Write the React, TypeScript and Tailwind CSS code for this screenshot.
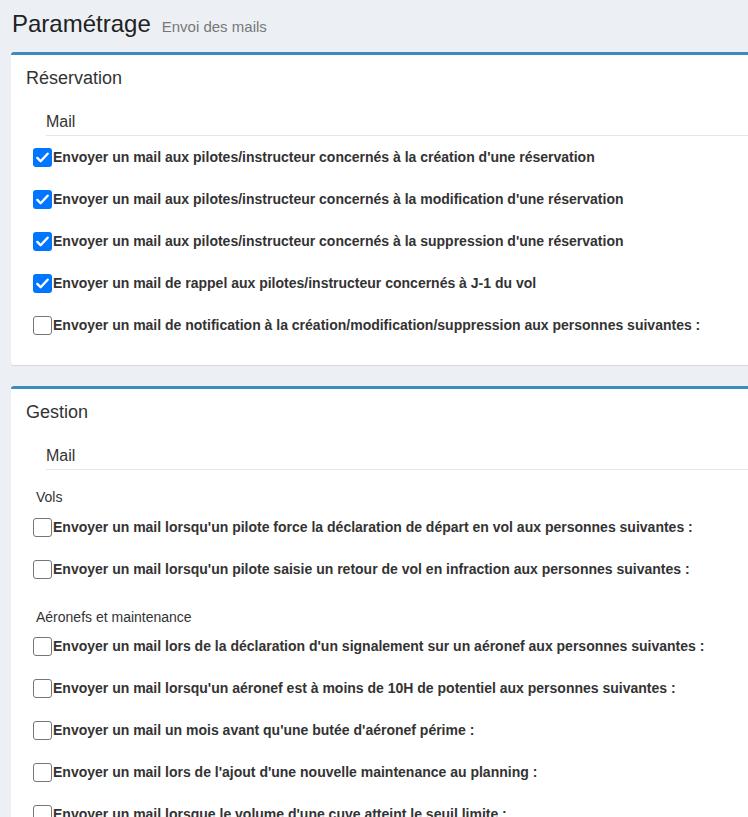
import React from "react";

type Row = { label: string; checked?: boolean };

const RESERVATION: Row[] = [
  { label: "Envoyer un mail aux pilotes/instructeur concernés à la création d'une réservation", checked: true },
  { label: "Envoyer un mail aux pilotes/instructeur concernés à la modification d'une réservation", checked: true },
  { label: "Envoyer un mail aux pilotes/instructeur concernés à la suppression d'une réservation", checked: true },
  { label: "Envoyer un mail de rappel aux pilotes/instructeur concernés à J-1 du vol", checked: true },
  { label: "Envoyer un mail de notification à la création/modification/suppression aux personnes suivantes :" },
];

const VOLS: Row[] = [
  { label: "Envoyer un mail lorsqu'un pilote force la déclaration de départ en vol aux personnes suivantes :" },
  { label: "Envoyer un mail lorsqu'un pilote saisie un retour de vol en infraction aux personnes suivantes :" },
];

const AERONEFS: Row[] = [
  { label: "Envoyer un mail lors de la déclaration d'un signalement sur un aéronef aux personnes suivantes :" },
  { label: "Envoyer un mail lorsqu'un aéronef est à moins de 10H de potentiel aux personnes suivantes :" },
  { label: "Envoyer un mail un mois avant qu'une butée d'aéronef périme :" },
  { label: "Envoyer un mail lors de l'ajout d'une nouvelle maintenance au planning :" },
  { label: "Envoyer un mail lorsque le volume d'une cuve atteint le seuil limite :" },
];

function CheckRow({ label, checked }: Row) {
  return (
    <label className="flex h-[42px] items-center pl-[22px]">
      {checked ? (
        <span className="flex h-[19px] w-[19px] shrink-0 items-center justify-center rounded-[3px] bg-[#0075ff]">
          <svg width="15" height="15" viewBox="0 0 16 16" fill="none">
            <path d="M2.5 8.5l3.5 3.5 7.5-8" stroke="white" strokeWidth="2.6" strokeLinecap="round" strokeLinejoin="round" />
          </svg>
        </span>
      ) : (
        <span className="h-[19px] w-[19px] shrink-0 rounded-[3px] border border-[#767676] bg-white" />
      )}
      <span className="ml-[1px] whitespace-nowrap text-[14px] font-bold text-[#333]">{label}</span>
    </label>
  );
}

function Legend() {
  return (
    <div className="ml-[35px] border-b border-[#e5e5e5] pt-[14px] pb-[2px] text-[16px] leading-[22px] text-[#333]">
      Mail
    </div>
  );
}

function Box({ title, children, className = "" }: { title: string; children: React.ReactNode; className?: string }) {
  return (
    <div className={`w-[780px] rounded-[3px] border-t-[3px] border-[#3c8dbc] bg-white shadow-[0_1px_1px_rgba(0,0,0,0.1)] ${className}`}>
      <div className="flex h-[42px] items-center pl-[15px] pt-[5px] text-[18px] text-[#333]">{title}</div>
      {children}
    </div>
  );
}

export default function App() {
  return (
    <div
      className="h-[817px] w-[748px] overflow-hidden bg-[#ecf0f5] pl-[11px]"
      style={{ fontFamily: '"Liberation Sans", Arial, sans-serif' }}
    >
      <div className="flex items-baseline pt-[11px] pl-[1px]">
        <h1 className="text-[24px] leading-[26px] text-[#222]">Paramétrage</h1>
        <small className="ml-[11px] text-[15px] text-[#777]">Envoi des mails</small>
      </div>

      <Box title="Réservation" className="mt-[13px] pb-[18px]">
        <Legend />
        <div className="pt-[1px]">
          {RESERVATION.map((r) => (
            <CheckRow key={r.label} {...r} />
          ))}
        </div>
      </Box>

      <Box title="Gestion" className="mt-[21px] pb-[20px]">
        <Legend />
        <div className="pl-[25px] pt-[18px] text-[14px] leading-[19px] text-[#333]">Vols</div>
        {VOLS.map((r) => (
          <CheckRow key={r.label} {...r} />
        ))}
        <div className="pl-[25px] pt-[17px] text-[14px] leading-[18px] text-[#333]">Aéronefs et maintenance</div>
        {AERONEFS.map((r) => (
          <CheckRow key={r.label} {...r} />
        ))}
      </Box>
    </div>
  );
}
